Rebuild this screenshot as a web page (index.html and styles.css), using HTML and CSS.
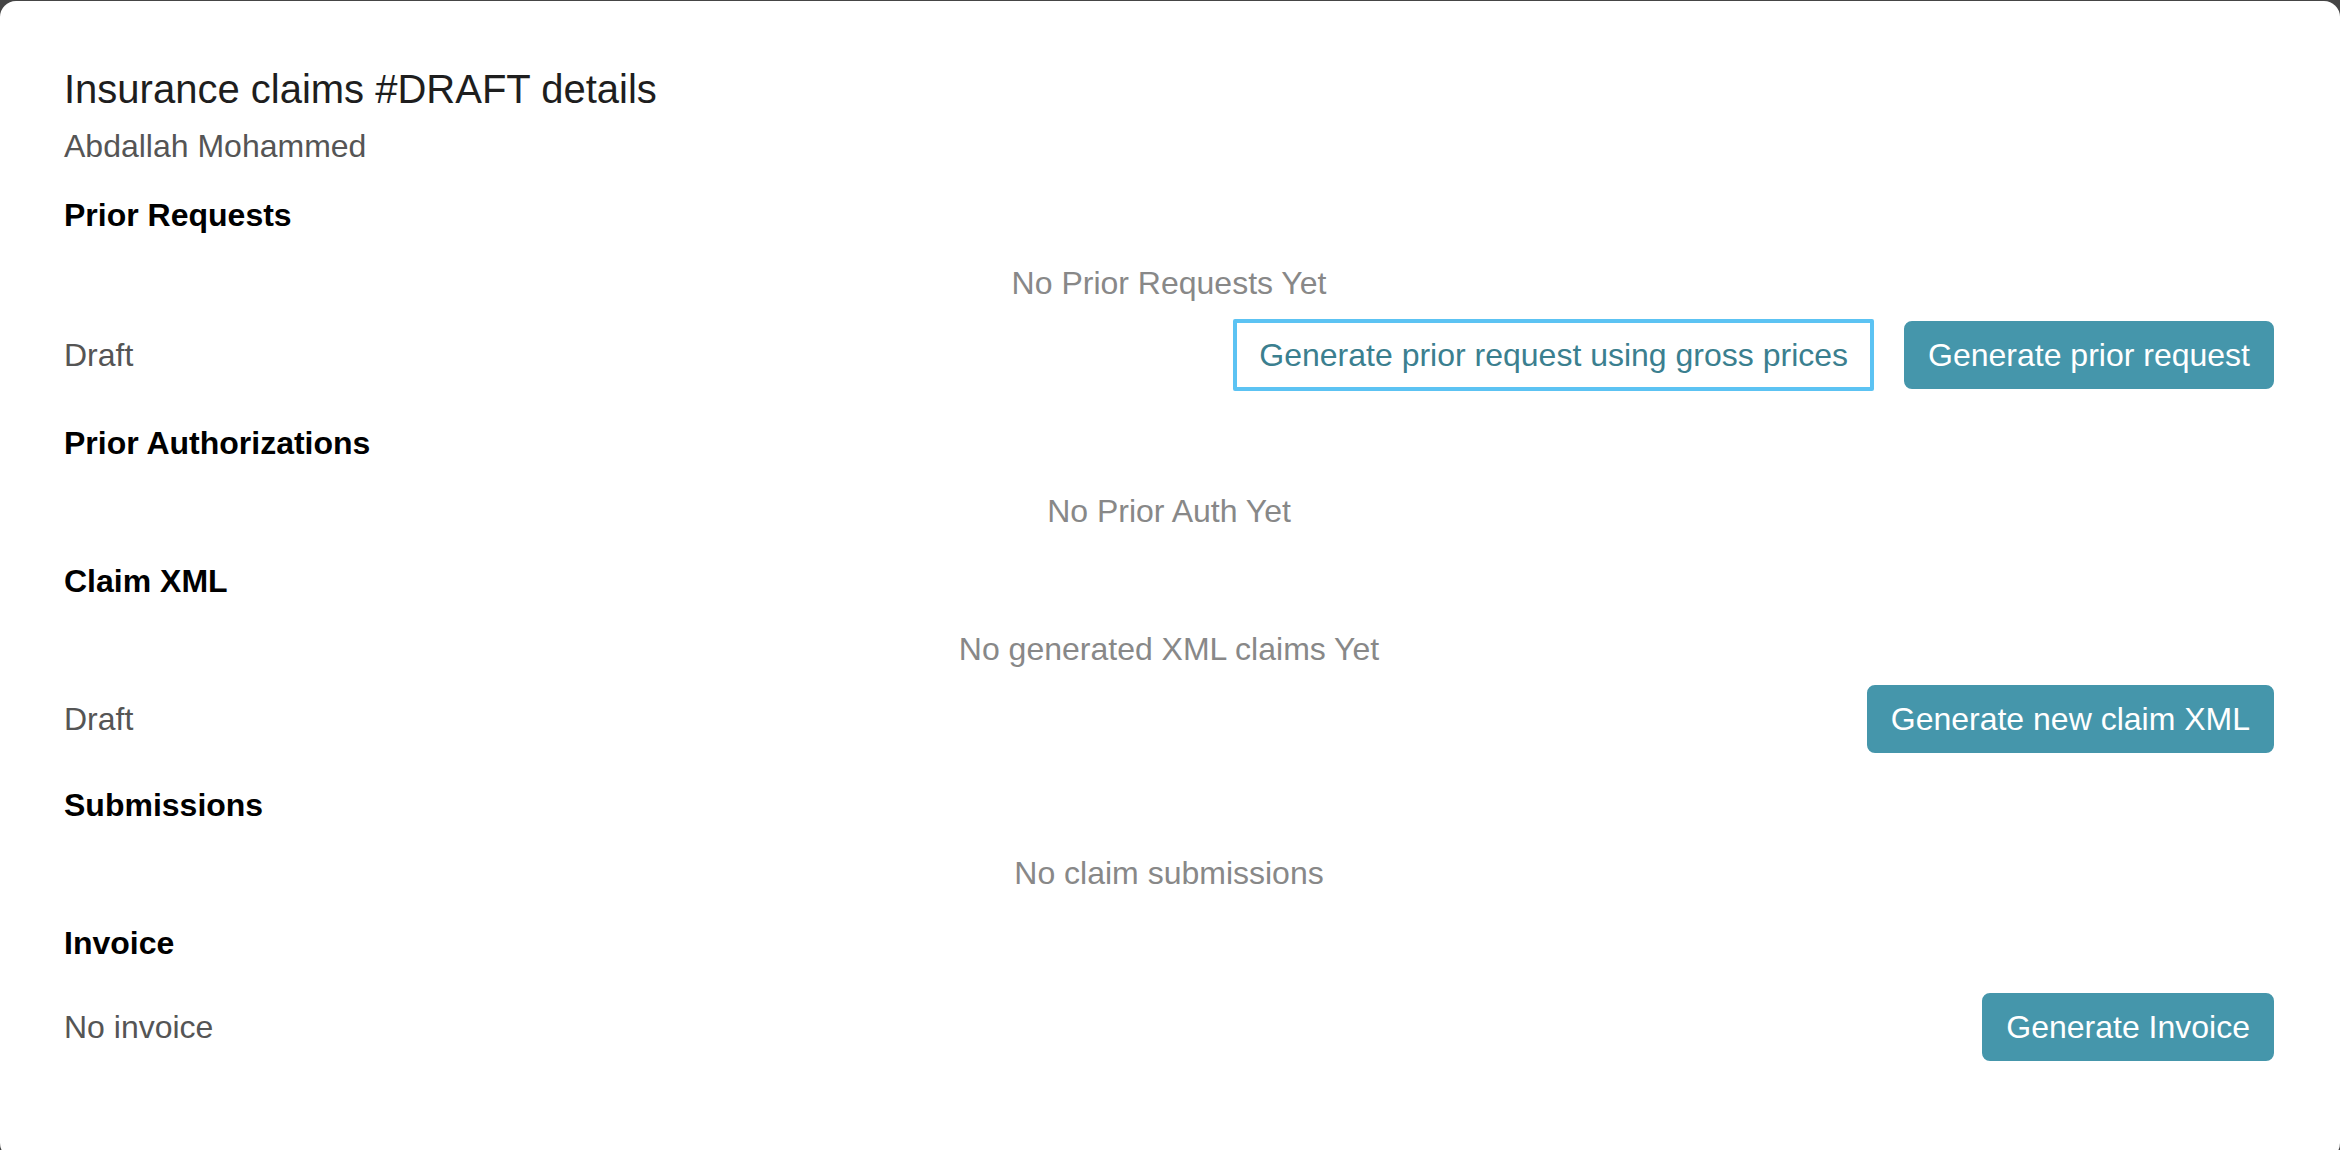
FILE: index.html
```html
<!DOCTYPE html>
<html lang="en">
<head>
<meta charset="utf-8">
<title>Insurance claims #DRAFT details</title>
<link rel="stylesheet" href="styles.css">
</head>
<body>
<div class="panel">
  <h1 class="title">Insurance claims #DRAFT details</h1>
  <div class="patient">Abdallah Mohammed</div>

  <section class="section">
    <h2 class="heading">Prior Requests</h2>
    <div class="empty">No Prior Requests Yet</div>
    <div class="row">
      <span class="status">Draft</span>
      <div class="actions">
        <button class="btn btn-outline">Generate prior request using gross prices</button>
        <button class="btn btn-primary">Generate prior request</button>
      </div>
    </div>
  </section>

  <section class="section">
    <h2 class="heading">Prior Authorizations</h2>
    <div class="empty">No Prior Auth Yet</div>
  </section>

  <section class="section">
    <h2 class="heading">Claim XML</h2>
    <div class="empty">No generated XML claims Yet</div>
    <div class="row">
      <span class="status">Draft</span>
      <div class="actions">
        <button class="btn btn-primary">Generate new claim XML</button>
      </div>
    </div>
  </section>

  <section class="section">
    <h2 class="heading">Submissions</h2>
    <div class="empty">No claim submissions</div>
  </section>

  <section class="section">
    <h2 class="heading">Invoice</h2>
    <div class="row">
      <span class="status">No invoice</span>
      <div class="actions">
        <button class="btn btn-primary">Generate Invoice</button>
      </div>
    </div>
  </section>
</div>
</body>
</html>
```

FILE: styles.css
```css
html, body {
  margin: 0;
  padding: 0;
  height: 100%;
  overflow: hidden;
}

body {
  background: #454545;
  font-family: "Liberation Sans", Arial, Helvetica, sans-serif;
}

.panel {
  box-sizing: border-box;
  margin-top: 1px;
  height: 1158px;
  background: #ffffff;
  border-radius: 16px;
  padding: 64px 66px 0 64px;
}

.title {
  margin: 0;
  font-size: 40px;
  line-height: 48px;
  font-weight: 400;
  color: #1e1e1e;
}

.patient {
  margin-top: 9px;
  font-size: 32px;
  line-height: 48px;
  color: #555555;
}

.section {
  display: flex;
  flex-direction: column;
  margin-top: 22px;
}

.patient + .section {
  margin-top: 21px;
}

.heading {
  margin: 0;
  font-size: 32px;
  line-height: 48px;
  font-weight: 700;
  color: #000000;
}

.empty {
  margin-top: 20px;
  font-size: 32px;
  line-height: 48px;
  color: #888888;
  text-align: center;
}

.row {
  display: flex;
  justify-content: space-between;
  align-items: center;
  min-height: 68px;
  margin-bottom: 6px;
}

.empty + .row {
  margin-top: 12px;
}

.heading + .row {
  margin-top: 26px;
}

.status {
  font-size: 32px;
  line-height: 48px;
  color: #555555;
}

.actions {
  display: flex;
  gap: 30px;
  align-items: center;
}

.btn {
  font-family: "Liberation Sans", Arial, Helvetica, sans-serif;
  font-size: 32px;
  line-height: 48px;
  padding: 8px 22px;
  border: 2px solid transparent;
  border-radius: 8px;
  cursor: pointer;
  white-space: nowrap;
}

.btn-primary {
  background: #4596ab;
  border-color: #4596ab;
  color: #ffffff;
}

.btn-outline {
  background: #ffffff;
  border: 4px solid #5cc3f3;
  border-radius: 2px;
  padding: 8px 22px;
  color: #3b7f8f;
}
```
